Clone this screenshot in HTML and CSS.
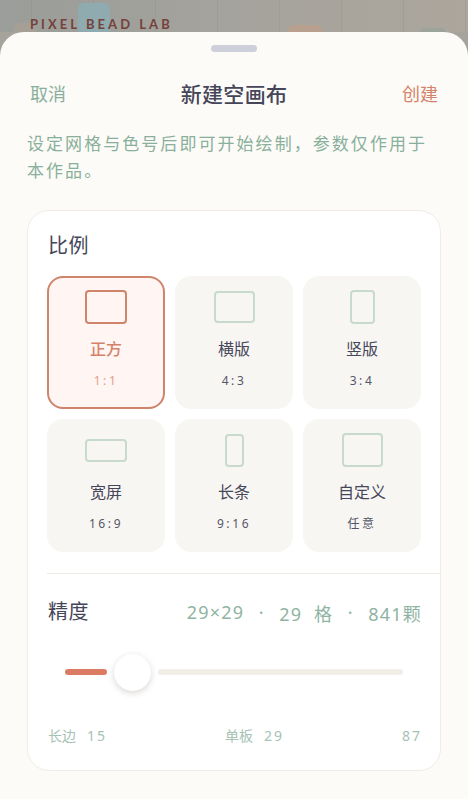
FILE: index.html
```html
<!DOCTYPE html>
<html lang="zh-CN">
<head>
<meta charset="utf-8">
<title>新建空画布</title>
<link rel="stylesheet" href="styles.css">
</head>
<body>
<div class="backdrop">
  <div class="bead bead-blue"></div>
  <div class="bead bead-grey"></div>
  <div class="bead bead-peach"></div>
  <div class="bead bead-green"></div>
  <div class="brand">PIXEL BEAD LAB</div>
</div>
<main class="sheet">
  <div class="handle"></div>
  <header class="head">
    <span class="cancel">取消</span>
    <h1 class="title">新建空画布</h1>
    <span class="create">创建</span>
  </header>
  <p class="desc">设定网格与色号后即可开始绘制，参数仅作用于本作品。</p>
  <section class="card">
    <h2 class="label">比例</h2>
    <div class="grid">
      <div class="tile active"><div class="slot"><i class="shape s-square"></i></div><div class="name">正方</div><div class="ratio">1:1</div></div>
      <div class="tile"><div class="slot"><i class="shape s-land"></i></div><div class="name">横版</div><div class="ratio">4:3</div></div>
      <div class="tile"><div class="slot"><i class="shape s-port"></i></div><div class="name">竖版</div><div class="ratio">3:4</div></div>
      <div class="tile"><div class="slot"><i class="shape s-wide"></i></div><div class="name">宽屏</div><div class="ratio">16:9</div></div>
      <div class="tile"><div class="slot"><i class="shape s-tall"></i></div><div class="name">长条</div><div class="ratio">9:16</div></div>
      <div class="tile"><div class="slot"><i class="shape s-custom"></i></div><div class="name">自定义</div><div class="ratio">任意</div></div>
    </div>
    <div class="rule"></div>
    <div class="prec">
      <h2 class="label">精度</h2>
      <div class="stats"><span>29×29</span><span>·</span><span>29  格</span><span>·</span><span>841颗</span></div>
    </div>
    <div class="slider">
      <div class="fill"></div>
      <div class="thumb"></div>
      <div class="track"></div>
    </div>
    <div class="scale">
      <span class="tick"><span>长边</span><span class="num">15</span></span>
      <span class="tick"><span>单板</span><span class="num">29</span></span>
      <span class="tick"><span class="num">87</span></span>
    </div>
  </section>
</main>
</body>
</html>
```

FILE: styles.css
```css
* { box-sizing: border-box; }
html, body { margin: 0; height: 100%; }
body {
  width: 468px;
  height: 799px;
  overflow: hidden;
  position: relative;
  background: #a5a39c;
  font-family: "Noto Sans", "Noto Sans CJK SC", sans-serif;
}
.backdrop {
  height: 32px;
  position: relative;
  overflow: hidden;
  background:
    repeating-linear-gradient(90deg, transparent 0 31px, rgba(130,130,125,.22) 31px 32px, transparent 32px 62px),
    linear-gradient(90deg, #9a9d99 0%, #a5a39d 50%, #aca69c 100%);
  padding: 17px 0 0 30px;
}
.brand {
  position: relative;
  font-family: Lato, "Liberation Sans", sans-serif;
  font-size: 13px;
  line-height: 14px;
  font-weight: 700;
  letter-spacing: 3.05px;
  color: #75413a;
}
.bead { position: absolute; border-radius: 6px; }
.bead-blue { left: 78px; top: 3px; width: 32px; height: 32px; background: #8fabb0; }
.bead-grey { left: 14px; top: 23px; width: 22px; height: 14px; background: #a59f96; }
.bead-peach { left: 288px; top: 25px; width: 34px; height: 14px; background: #b9a08e; }
.bead-green { left: 420px; top: 28px; width: 26px; height: 10px; background: #9ba39b; }

.sheet {
  height: 767px;
  background: #fdfbf7;
  border-radius: 24px 24px 0 0;
  padding: 13px 27px 0;
}
.handle {
  width: 46px;
  height: 7px;
  margin: 0 auto;
  border-radius: 4px;
  background: #cdd0da;
}
.head {
  display: flex;
  align-items: center;
  justify-content: space-between;
  height: 28px;
  margin-top: 27px;
  padding: 0 3px;
}
.cancel { font-size: 18px; color: #88b09c; }
.create { font-size: 18px; color: #d5826a; }
.title { margin: 0; font-size: 21px; font-weight: 500; color: #45465a; letter-spacing: .3px; }
.desc {
  margin: 23px 0 0;
  font-size: 17px;
  line-height: 27px;
  letter-spacing: 2.05px;
  color: #88b09c;
}
.card {
  margin-top: 26px;
  width: 414px;
  height: 561px;
  background: #fff;
  border: 1px solid #f0ede8;
  border-radius: 22px;
  padding: 0 19px;
}
.label { margin: 0; font-size: 20px; font-weight: 400; letter-spacing: .5px; color: #45465a; line-height: 28px; }
.card > .label { margin-top: 21px; padding-left: 1px; }
.grid {
  display: grid;
  grid-template-columns: repeat(3, 118px);
  grid-auto-rows: 133px;
  gap: 10px;
  margin-top: 16px;
}
.tile {
  background: #f8f6f2;
  border-radius: 16px;
  display: flex;
  flex-direction: column;
  align-items: center;
  padding-top: 13px;
}
.tile.active {
  background: #fff5f2;
  border: 2px solid #d0846b;
  padding-top: 11px;
}
.slot { height: 36px; display: flex; align-items: center; justify-content: center; }
.shape {
  display: block;
  border: 2px solid #c8dacd;
  border-radius: 4px;
}
.active .shape { border-color: #d0846b; }
.s-square { width: 42px; height: 34px; }
.s-land { width: 41px; height: 32px; }
.s-port { width: 25px; height: 34px; }
.s-wide { width: 42px; height: 23px; }
.s-tall { width: 19px; height: 33px; }
.s-custom { width: 41px; height: 34px; }
.name {
  margin-top: 13px;
  font-size: 16px;
  line-height: 22px;
  color: #45465a;
}
.ratio {
  margin-top: 12px;
  font-size: 12px;
  line-height: 18px;
  letter-spacing: 2.6px;
  color: #55566a;
}
.active .name { color: #d5826a; font-weight: 500; }
.active .ratio { color: #dda08d; }
.rule { height: 1px; background: #ece9e3; margin: 21px -19px 0 0; }
.prec {
  display: flex;
  justify-content: space-between;
  align-items: center;
  margin-top: 23px;
}
.prec .label { padding-left: 1px; padding-top: 1px; }
.stats {
  display: flex;
  gap: 14.5px;
  margin-right: -1px;
  padding-top: 3px;
  font-size: 18px;
  letter-spacing: 1.2px;
  color: #8fb3a2;
  white-space: pre;
}
.slider {
  display: flex;
  align-items: center;
  margin: 27px 0 0 18px;
  height: 38px;
}
.fill { width: 42px; height: 6px; border-radius: 3px; background: #dc7b63; }
.thumb {
  width: 37px;
  height: 37px;
  margin: 0 7px;
  border-radius: 50%;
  background: #fff;
  box-shadow: 0 2px 6px rgba(80,70,60,.22);
}
.track { width: 245px; height: 6px; border-radius: 3px; background: #f1eee6; }
.scale {
  display: flex;
  justify-content: space-between;
  margin-top: 35px;
  padding-left: 1px;
  font-size: 14px;
  line-height: 20px;
  color: #a6c2b4;
}
.tick { display: flex; gap: 11px; }
.num { letter-spacing: 2px; margin-right: -1px; }
```
